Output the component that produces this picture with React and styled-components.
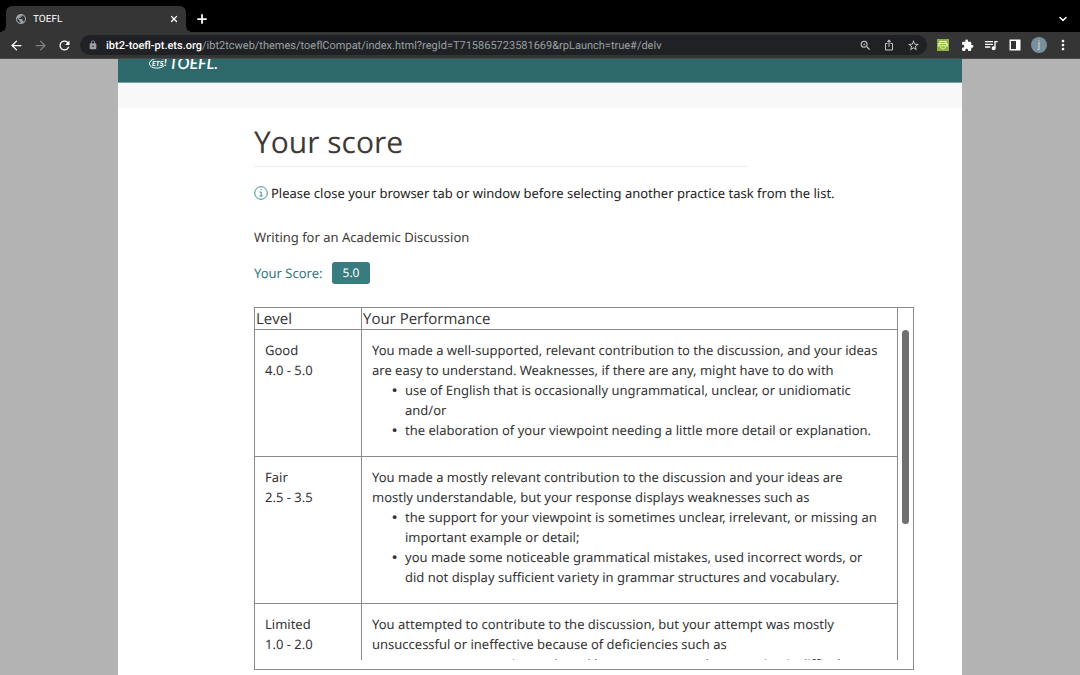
import React from 'react';
import styled, { createGlobalStyle } from 'styled-components';
import { ArrowLeft, ArrowRight, X, Plus, ChevronDown } from 'lucide-react';
import {
  MdLock, MdRefresh, MdZoomIn, MdIosShare, MdStarBorder, MdExtension, MdQueueMusic, MdMoreVert, MdPublic,
} from 'react-icons/md';

const uiFont = 'Roboto, "Liberation Sans", sans-serif';
const headingFont = '"Open Sans", sans-serif';
const bodyFont = '"Noto Sans", "Open Sans", sans-serif';

const GlobalStyle = createGlobalStyle`
  * { box-sizing: border-box; }
  body { margin: 0; background: #b3b3b3; overflow: hidden; text-rendering: geometricPrecision; }
  button { font: inherit; color: inherit; background: none; border: 0; padding: 0; cursor: pointer; }
  svg { flex: none; }
`;

const Window = styled.div`
  display: flex;
  flex-direction: column;
  height: 100vh;
`;

const Browser = styled.div`
  flex: none;
  font-family: ${uiFont};
  background: #000;
  color: #fff;
`;

const TabStrip = styled.div`
  display: flex;
  align-items: flex-end;
  height: 32px;
  padding: 0 11px 0 6px;
`;

const Tab = styled.div`
  position: relative;
  display: flex;
  align-items: center;
  gap: 6px;
  width: 180px;
  height: 26px;
  padding: 0 6px 0 9px;
  border-radius: 6px 6px 0 0;
  background: #353535;
  font-size: 10px;

  &::before, &::after {
    content: '';
    position: absolute;
    bottom: 0;
    width: 6px;
    height: 6px;
  }
  &::before { left: -6px; background: radial-gradient(circle at 0 0, #000 6px, #353535 6px); }
  &::after { right: -6px; background: radial-gradient(circle at 100% 0, #000 6px, #353535 6px); }
`;

const TabTitle = styled.span`
  flex: 1;
`;

const IconButton = styled.button`
  display: flex;
  align-items: center;
  justify-content: center;
  width: 12px;
  height: 12px;
  color: ${(p) => p.$color || '#fff'};
`;

const NewTab = styled(IconButton)`
  margin: 0 auto 7px 10px;
`;

const TabMenu = styled(IconButton)`
  margin-bottom: 7px;
`;

const Toolbar = styled.div`
  display: flex;
  align-items: center;
  gap: 12px;
  height: 27px;
  padding: 0 11px 0 10px;
  background: #353535;
  border-bottom: 1px solid #4a4a4a;
`;

const AddressBar = styled.div`
  flex: 1;
  display: flex;
  align-items: center;
  gap: 12px;
  height: 20px;
  margin: 0 -2px;
  padding: 0 8px;
  border-radius: 10px;
  background: #202124;
`;

const UrlInfo = styled.div`
  flex: 1;
  display: flex;
  align-items: center;
  gap: 8px;
  font-size: 11px;
  color: #9aa0a6;
  white-space: nowrap;
`;

const Host = styled.span`
  color: #fff;
  font-weight: 500;
`;

const Avatar = styled.button`
  width: 16px;
  height: 16px;
  margin: 0 -2px;
  border-radius: 50%;
  background: #78909c;
  color: #cfd8dc;
  font-size: 10px;
  line-height: 16px;
`;

const Page = styled.main`
  flex: 1;
  display: flex;
  flex-direction: column;
  width: 100%;
  max-width: 844px;
  margin: 0 auto;
  min-height: 0;
  overflow: hidden;
  background: #fff;
  font-family: ${bodyFont};
  font-size: 13px;
  line-height: 20px;
  color: #333;
`;

const Header = styled.header`
  flex: none;
  display: flex;
  align-items: flex-end;
  height: 24px;
  padding: 0 30px 12px;
  overflow: hidden;
  background: #2d686b;
  border-bottom: 1px solid #7ba0a2;
`;

const Logo = styled.svg`
  flex: none;
  display: block;
  overflow: visible;
`;

const SubBar = styled.div`
  flex: none;
  height: 25px;
  background: #f8f8f8;
`;

const Content = styled.div`
  padding: 14px 48px 0 136px;
`;

const Title = styled.h1`
  width: 75%;
  margin: 0;
  padding-bottom: 4px;
  border-bottom: 1px solid #f0f0f0;
  font-family: ${headingFont};
  font-size: 30px;
  font-weight: 400;
  line-height: 40px;
  color: #3f3a38;
`;

const Notice = styled.p`
  display: flex;
  align-items: center;
  gap: 3px;
  margin: 16px 0 0;
  color: #222;
`;

const Task = styled.p`
  margin: 24px 0 0;
  color: #3f3a38;
`;

const ScoreRow = styled.p`
  display: flex;
  align-items: center;
  gap: 9px;
  margin: 15px 0 23px;
  color: #2f797c;
`;

const Badge = styled.span`
  padding: 1px 11px;
  border-radius: 3px;
  background: #387c80;
  color: #fff;
  font-size: 12px;
`;

const Frame = styled.div`
  display: flex;
  padding-bottom: 9px;
  border: 1px solid #8a8a8a;
`;

const Scroller = styled.div`
  flex: 1;
  max-height: 352px;
  overflow-y: auto;
  scrollbar-width: none;
`;

const Rail = styled.div`
  flex: none;
  width: 15px;
  padding: 22px 4px 0;
`;

const Thumb = styled.div`
  height: 194px;
  border-radius: 4px;
  background: #707070;
`;

const Table = styled.table`
  width: 100%;
  table-layout: fixed;
  border-collapse: separate;
  border-spacing: 0;
`;

const LevelCol = styled.col`
  width: 107px;
`;

const HeadCell = styled.th`
  position: sticky;
  top: 0;
  height: 22px;
  padding: 1px 1px 0;
  background: #fff;
  border-right: 1px solid #8a8a8a;
  border-bottom: 1px solid #8a8a8a;
  font-family: ${headingFont};
  font-size: 15px;
  font-weight: 400;
  line-height: 20px;
  text-align: left;
`;

const Cell = styled.td`
  padding: 10px 17px 16px 10px;
  border-right: 1px solid #8a8a8a;
  border-bottom: 1px solid #8a8a8a;
  vertical-align: top;
`;

const List = styled.ul`
  margin: 0;
  padding-left: 33px;
  list-style-type: '•\\2002';

  li::marker { font-family: "DejaVu Sans", sans-serif; }
`;

const levels = [
  {
    name: 'Good',
    range: '4.0 - 5.0',
    text: 'You made a well-supported, relevant contribution to the discussion, and your ideas are easy to understand. Weaknesses, if there are any, might have to do with',
    points: [
      'use of English that is occasionally ungrammatical, unclear, or unidiomatic and/or',
      'the elaboration of your viewpoint needing a little more detail or explanation.',
    ],
  },
  {
    name: 'Fair',
    range: '2.5 - 3.5',
    text: 'You made a mostly relevant contribution to the discussion and your ideas are mostly understandable, but your response displays weaknesses such as',
    points: [
      'the support for your viewpoint is sometimes unclear, irrelevant, or missing an important example or detail;',
      'you made some noticeable grammatical mistakes, used incorrect words, or did not display sufficient variety in grammar structures and vocabulary.',
    ],
  },
  {
    name: 'Limited',
    range: '1.0 - 2.0',
    text: 'You attempted to contribute to the discussion, but your attempt was mostly unsuccessful or ineffective because of deficiencies such as',
    points: ['numerous errors in words and language use, so that meaning is difficult to understand;'],
  },
];

export default function App() {
  return (
    <Window>
      <GlobalStyle />
      <Browser>
        <TabStrip>
          <Tab>
            <MdPublic size={12} color="#9aa0a6" />
            <TabTitle>TOEFL</TabTitle>
            <IconButton aria-label="Close tab"><X size={10} strokeWidth={3} /></IconButton>
          </Tab>
          <NewTab aria-label="New tab"><Plus size={14} strokeWidth={3} /></NewTab>
          <TabMenu aria-label="Search tabs"><ChevronDown size={12} strokeWidth={3} /></TabMenu>
        </TabStrip>
        <Toolbar>
          <IconButton aria-label="Back"><ArrowLeft size={15} strokeWidth={2} /></IconButton>
          <IconButton aria-label="Forward" $color="#808080"><ArrowRight size={15} strokeWidth={2} /></IconButton>
          <IconButton aria-label="Reload"><MdRefresh size={15} /></IconButton>
          <AddressBar>
            <UrlInfo>
              <MdLock size={10} />
              <span><Host>ibt2-toefl-pt.ets.org</Host>/ibt2tcweb/themes/toeflCompat/index.html?regId=T715865723581669&amp;rpLaunch=true#/delv</span>
            </UrlInfo>
            <IconButton aria-label="Zoom" $color="#c4c7c5"><MdZoomIn size={13} /></IconButton>
            <IconButton aria-label="Share" $color="#c4c7c5"><MdIosShare size={12} /></IconButton>
            <IconButton aria-label="Bookmark" $color="#c4c7c5"><MdStarBorder size={13} /></IconButton>
          </AddressBar>
          <IconButton aria-label="Print extension">
            <svg width="12" height="12" viewBox="0 0 12 12">
              <rect width="12" height="12" fill="#8ab43f" />
              <path d="M3 3.500V2.500h6v1M2 7.500V4.500h8v3" fill="none" stroke="#fff" strokeWidth="1.200" />
              <path d="M3.500 6.500h5v1.500q-.6 2-2.500 2t-2.500-2z" fill="#9dc45c" stroke="#fff" strokeWidth=".6" />
            </svg>
          </IconButton>
          <IconButton aria-label="Extensions"><MdExtension size={13} /></IconButton>
          <IconButton aria-label="Media controls"><MdQueueMusic size={16} /></IconButton>
          <IconButton aria-label="Side panel">
            <svg width="12" height="12" viewBox="0 0 12 12">
              <path fillRule="evenodd" d="M.5 .5h11v11H.5zM2 2v8h5V2z" fill="#fff" />
            </svg>
          </IconButton>
          <Avatar aria-label="Profile">j</Avatar>
          <IconButton aria-label="Menu"><MdMoreVert size={16} /></IconButton>
        </Toolbar>
      </Browser>
      <Page>
        <Header>
          <Logo width="68" height="16" viewBox="0 0 68 16" role="img" aria-label="ETS TOEFL" fill="#fff" fontFamily='Lato, "Open Sans", sans-serif' fontStyle="italic">
            <path d="M15.500 5C10 3 1.500 5 1.500 9.800c0 5 11 5.500 14.500 2" fill="none" stroke="#fff" strokeWidth="1" />
            <text x="4" y="12" fontSize="7" fontWeight="900">ETS</text>
            <text x="16" y="12" fontSize="10" fontWeight="900">!</text>
            <text x="21" y="15" fontSize="16" fontWeight="600">TOEFL.</text>
          </Logo>
        </Header>
        <SubBar />
        <Content>
          <Title>Your score</Title>
          <Notice>
            <svg width="14" height="14" viewBox="0 0 14 14" fill="none" stroke="#3d8c90" aria-hidden="true">
              <circle cx="7" cy="7" r="6.300" strokeWidth="1" />
              <path d="M5.700 6h1.500v4M5.500 10h3.200M6.500 3.500h1.200" strokeWidth="1" />
            </svg>
            Please close your browser tab or window before selecting another practice task from the list.
          </Notice>
          <Task>Writing for an Academic Discussion</Task>
          <ScoreRow>Your Score: <Badge>5.0</Badge></ScoreRow>
          <Frame>
            <Scroller>
              <Table>
                <colgroup><LevelCol /><col /></colgroup>
                <thead>
                  <tr>
                    <HeadCell scope="col">Level</HeadCell>
                    <HeadCell scope="col">Your Performance</HeadCell>
                  </tr>
                </thead>
                <tbody>
                  {levels.map((level) => (
                    <tr key={level.name}>
                      <Cell>{level.name}<br />{level.range}</Cell>
                      <Cell>
                        {level.text}
                        <List>{level.points.map((point) => <li key={point}>{point}</li>)}</List>
                      </Cell>
                    </tr>
                  ))}
                </tbody>
              </Table>
            </Scroller>
            <Rail><Thumb /></Rail>
          </Frame>
        </Content>
      </Page>
    </Window>
  );
}
